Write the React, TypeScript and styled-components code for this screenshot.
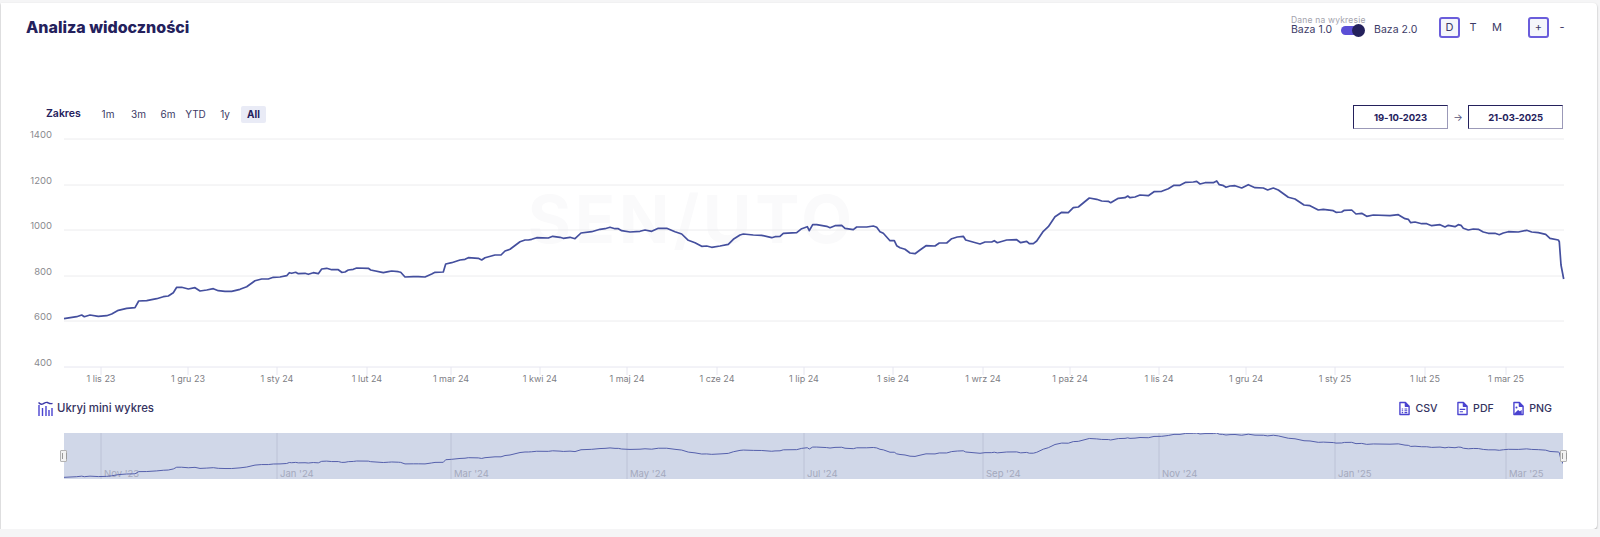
import React from 'react';
import styled, { createGlobalStyle } from 'styled-components';

const GlobalStyle = createGlobalStyle`
  html, body {
    margin: 0;
    padding: 0;
    background: #f5f5f6;
  }
  * { box-sizing: border-box; }
`;

const NAVY = '#24215c';
const ACCENT = '#6a5ddb';
const ICON = '#4a43d0';
const LINE = '#444f9e';
const FONT = '"Inter", "Noto Sans", sans-serif';

const Card = styled.div`
  width: 1596px;
  height: 526px;
  margin: 3px 0 0 1px;
  padding: 11px 30px 0 25px;
  background: #fff;
  border-radius: 0 4px 4px 0;
  box-shadow: 0 1px 2px rgba(0, 0, 0, 0.35);
  font-family: ${FONT};
  color: ${NAVY};
  display: flex;
  flex-direction: column;
`;

const Header = styled.div`
  display: flex;
  justify-content: space-between;
  align-items: flex-start;
  height: 90px;
`;

const Title = styled.h1`
  margin: 2px 0 0;
  font-size: 16px;
  line-height: 22px;
  font-weight: 800;
`;

const Controls = styled.div`
  display: flex;
  align-items: center;
  height: 26px;
`;

const BaseSwitch = styled.div`
  align-self: flex-start;
  width: 148px;
  white-space: nowrap;
`;

const BaseCaption = styled.div`
  font-size: 8.5px;
  line-height: 10px;
  margin-top: 0.5px;
  color: #a3a3ad;
  letter-spacing: 0.2px;
`;

const BaseRow = styled.div`
  display: flex;
  align-items: center;
  font-size: 10.5px;
  line-height: 14px;
  color: #3c3a66;
  margin-top: -1.5px;
`;

const Track = styled.span`
  position: relative;
  display: inline-block;
  width: 20px;
  height: 9px;
  margin: 0 13px 0 9px;
  border-radius: 5px;
  background: #5b4fd6;
`;

const Knob = styled.span`
  position: absolute;
  right: -4px;
  top: -2px;
  width: 13px;
  height: 13px;
  border-radius: 50%;
  background: ${NAVY};
`;

const Toggle = styled.button<{ $active?: boolean; $w: number; $ml?: number }>`
  width: ${p => p.$w}px;
  height: 21px;
  margin-left: ${p => p.$ml ?? 0}px;
  padding: 0;
  font-family: inherit;
  font-size: 11px;
  color: #3c3a66;
  background: ${p => (p.$active ? '#f5f6fb' : 'transparent')};
  border: ${p => (p.$active ? `2px solid ${ACCENT}` : 'none')};
  border-radius: 3px;
`;

const RangeBar = styled.div`
  display: flex;
  align-items: center;
  height: 26px;
  padding-left: 20px;
`;

const RangeGroup = styled.div`
  display: flex;
  align-items: center;
  margin-bottom: 6px;
`;

const RangeLabel = styled.span`
  width: 47px;
  font-size: 10.5px;
  font-weight: 600;
  margin-bottom: 2px;
`;

const RangeButton = styled.button<{ $active?: boolean; $w: number }>`
  width: ${p => p.$w}px;
  height: 17px;
  padding: 0;
  border: none;
  border-radius: 2px;
  font-family: inherit;
  font-size: 10px;
  font-weight: ${p => (p.$active ? 700 : 400)};
  color: ${p => (p.$active ? NAVY : '#3c3a66')};
  background: ${p => (p.$active ? '#e9ebf6' : 'transparent')};
`;

const DateRange = styled.div`
  display: flex;
  align-items: center;
  margin-left: auto;
  margin-right: 4px;
`;

const DateBox = styled.div`
  width: 95px;
  height: 24px;
  display: flex;
  align-items: center;
  justify-content: center;
  font-size: 9.5px;
  font-weight: 700;
  letter-spacing: -0.1px;
  border: 1px solid ${NAVY};
  border-right-color: #9b99b8;
  border-bottom-color: #9b99b8;
`;

const Arrow = styled.span`
  width: 20px;
  text-align: center;
  font-size: 10px;
  color: #55537a;
`;

const ChartSvg = styled.svg`
  display: block;
  margin-left: -26px;
  flex: none;
`;

const ExportRow = styled.div`
  display: flex;
  align-items: center;
  height: 26px;
  margin-top: 9px;
  padding: 0 15px 0 12px;
`;

const MiniToggle = styled.div`
  display: flex;
  align-items: center;
  gap: 4px;
  font-size: 11.4px;
  font-weight: 500;
  color: #35335f;
`;

const Exports = styled.div`
  display: flex;
  gap: 19px;
  margin-left: auto;
`;

const ExportLink = styled.div`
  display: flex;
  align-items: center;
  gap: 5.5px;
  font-size: 10.6px;
  font-weight: 500;
  color: #35335f;
`;

const Navigator = styled.div`
  position: relative;
  width: 1499px;
  height: 46px;
  margin: 12px 0 0 38px;
`;

const NavigatorSvg = styled.svg`
  display: block;
`;

const Handle = styled.span<{ $side: 'left' | 'right' }>`
  position: absolute;
  top: 17px;
  ${p => p.$side}: -4px;
  width: 7px;
  height: 12px;
  background: #f2f2f2;
  border: 1px solid #b3b3b3;
  border-radius: 1px;
  &::after {
    content: '';
    position: absolute;
    left: 1px;
    top: 2px;
    width: 3px;
    height: 6px;
    border-left: 1px solid #9a9a9a;
    border-right: 1px solid #9a9a9a;
  }
`;

// points read off the reference, in page coordinates
const POINTS: [number, number][] = [
  [64,318.7],[76.7,316.7],[81.7,315],[84.3,316.7],[90,315],[98.3,316.3],[106.7,315.7],[111.7,314],[118.3,310.3],[126.7,308.3],
  [135,307.7],[138.7,301],[146.7,300.7],[156.7,298.7],[163.3,296.7],[168.3,296],[173.3,292.7],[176.7,287.3],[181.7,287.3],[188.3,289],
  [195,287.7],[200,291],[206.7,290],[213.3,288.7],[218.3,290.7],[225,291.3],[231.7,291.3],[240,289.3],[246.7,286.7],[255,280.7],
  [261.7,279],[268.3,279],[273.3,277.3],[280,277],[286.7,275.7],[289.3,272.7],[291.7,273.3],[295.7,272.3],[298.3,273.7],[305,273.3],
  [308.3,274.3],[313.3,272.7],[318.3,273.7],[321.7,269],[326.7,268.3],[331.7,269.7],[338.3,269.7],[341.7,272.3],[345,272],[348.3,270],
  [353.3,269.3],[356.7,268],[368.3,268.3],[370.7,270],[383.3,272.7],[388.3,271.7],[391.7,271],[398.3,271.7],[400.7,272.3],[405,277],
  [413.3,276.7],[418.3,276.7],[425,277],[431.7,274],[435,272.3],[443.3,272],[445.7,264],[451.7,262.7],[460,260],[465,259.3],
  [468.3,257.7],[478.3,258.3],[481.7,260],[485,257.7],[495,255],[501,255],[505,251],[510,249.3],[520,241.7],[525,240],
  [528.3,240],[531.7,239.3],[536.7,237.7],[548.3,238],[552.7,236.3],[560,237.3],[563.3,238.3],[570,237.3],[575,238.7],[581,233],
  [591.7,231.7],[600,229.3],[605,228.7],[610,227.3],[615,228.7],[618.3,228.7],[621.7,230.7],[630,232],[640,231.3],[645,230],
  [651.7,231.3],[658.3,228.3],[666.7,228.3],[675,231.7],[681.7,234],[688.3,240.3],[695,242.7],[701.7,246.3],[706.7,246],[711.7,247.3],
  [720,246],[728.3,244.3],[733.3,239.3],[740,235],[743.3,234],[753.3,235],[761.7,235.3],[771.7,237.7],[775,236.7],[780,236.3],
  [783.3,233.3],[796.7,232.7],[801.7,228.7],[807.3,226.7],[809.3,230.7],[812.7,224.7],[816.7,224.7],[826.7,226.3],[830,227.7],[835,225.7],
  [841.7,225.3],[845,228.3],[853.3,229.7],[856.7,227],[866.7,227],[873.3,226],[876.7,227.3],[880,231.7],[883.3,233.3],[890,240.7],
  [894.3,240.7],[896.7,245.7],[900,247.7],[905,249.3],[910,253],[915,253.7],[920,250],[926,245.7],[935,246],[939.3,243],
  [946.7,243],[951.7,238.7],[957.3,237],[963.3,236.3],[965.7,240],[980,244],[985,242],[991.7,242],[994.3,240.7],[997.3,242.7],
  [1006.7,240],[1016.7,239.7],[1020.7,242.7],[1026.7,241.3],[1029.3,243.7],[1033.3,243.7],[1036.7,241],[1043.3,231.3],[1048.3,226.7],[1055,216.7],
  [1061.7,212.3],[1068.3,212.7],[1073.3,207.7],[1078.3,207],[1089.3,198],[1096.7,199.3],[1101.7,201],[1108.3,201.3],[1110.7,202.7],[1118.3,198.3],
  [1125,197.7],[1127.7,196],[1130,197.7],[1135,197],[1140,195],[1148.3,195.7],[1154,191.7],[1161.7,191.3],[1168.3,188.7],[1174,185.3],
  [1180,185.3],[1185.7,182.3],[1193.3,182],[1196.7,181.3],[1200,184],[1205,182.7],[1213.3,182.7],[1216.7,181],[1219.3,184.7],[1222.7,185.3],
  [1226,187.3],[1230,186],[1235,185.7],[1241.7,188],[1248.3,184.7],[1255,187.7],[1263.3,188],[1267.7,190],[1273.3,188],[1278.3,190],
  [1288.3,197.3],[1295,199],[1304,205],[1310,205.7],[1318.3,210],[1323.3,209.3],[1333.3,210.7],[1336,212.3],[1341.7,212],[1344.3,210.3],
  [1351.7,210],[1356,214],[1361.7,213.3],[1366.7,216.3],[1373.3,215],[1390,215.7],[1398.3,214.7],[1405,218.7],[1408.3,219.3],[1410.7,222.7],
  [1415,222],[1421.7,223.7],[1426.7,223.7],[1431.7,225.7],[1440,224.7],[1445,227],[1448.3,225.3],[1455,226.7],[1458.3,224.7],[1461,225.3],
  [1463.3,228.3],[1468.3,230],[1473.3,229],[1478.3,229.3],[1483.3,232],[1488.3,233.3],[1495,233.3],[1499.3,234.7],[1503.3,233],[1508.3,231.7],
  [1518.3,232],[1526.7,230.3],[1531.7,232],[1538.3,232.7],[1545.7,234.3],[1550,238.3],[1558.3,240],[1559.3,241.7],[1561,265],[1563.7,279],
];

const GRID: [string, number][] = [['1400', 139], ['1200', 185], ['1000', 230], ['800', 276], ['600', 321], ['400', 367]];

const TICKS: [string, number][] = [
  ['1 lis 23', 101], ['1 gru 23', 188], ['1 sty 24', 277], ['1 lut 24', 367], ['1 mar 24', 451], ['1 kwi 24', 540],
  ['1 maj 24', 627], ['1 cze 24', 717], ['1 lip 24', 804], ['1 sie 24', 893], ['1 wrz 24', 983], ['1 paź 24', 1070],
  ['1 lis 24', 1159], ['1 gru 24', 1246], ['1 sty 25', 1335], ['1 lut 25', 1425], ['1 mar 25', 1506],
];

const MINI_TICKS: [string, number][] = [
  ["Nov '23", 101], ["Jan '24", 277], ["Mar '24", 451], ["May '24", 627], ["Jul '24", 804], ["Sep '24", 983],
  ["Nov '24", 1159], ["Jan '25", 1335], ["Mar '25", 1506],
];

const CHART_TOP = 130;
const MINI_LEFT = 64;

const mainPath = POINTS.map(([x, y]) => `${x},${y - CHART_TOP}`).join(' ');
const miniPath = POINTS.map(([x, y]) => `${x - MINI_LEFT},${(y - 181) * 0.322}`).join(' ');

const RANGES: { label: string; w: number; active?: boolean }[] = [
  { label: '1m', w: 30 },
  { label: '3m', w: 31 },
  { label: '6m', w: 28 },
  { label: 'YTD', w: 27 },
  { label: '1y', w: 32 },
  { label: 'All', w: 25, active: true },
];

const MiniIcon = () => (
  <svg width="15" height="15" viewBox="0 0 15 15" fill="none" stroke={ICON} strokeWidth="1.4">
    <path d="M0.500 1.500C2 3.200 3.500 3.600 5 2.800S8 0.800 9.500 1.500s2.800 1.800 5 .8" stroke="#3b37a8" />
    <path d="M1 4v11M4.500 7v8M8 5v10M11 9v6M14 7v8" />
  </svg>
);

const FileOutline = () => (
  <>
    <path d="M1 1h6l4 4v9H1z" strokeLinejoin="round" />
    <path d="M7 1v4h4" fill={ICON} strokeLinejoin="round" />
  </>
);

const CsvIcon = () => (
  <svg width="11" height="15" viewBox="0 0 12 15" fill="none" stroke={ICON} strokeWidth="1.5">
    <FileOutline />
    <path d="M3 8h1.500M6 8h3M3 10h1.500M6 10h3M3 12h1.500M6 12h3" strokeWidth="1.100" />
  </svg>
);

const PdfIcon = () => (
  <svg width="11" height="15" viewBox="0 0 12 15" fill="none" stroke={ICON} strokeWidth="1.5">
    <FileOutline />
    <path d="M3 8.500h6M3 11h3.500" strokeWidth="1.200" />
  </svg>
);

const PngIcon = () => (
  <svg width="11" height="15" viewBox="0 0 12 15" fill="none" stroke={ICON} strokeWidth="1.5">
    <FileOutline />
    <path d="M1.500 13 5.500 9l2 1.500 2-1.500V13.500h-8z" fill={ICON} stroke="none" />
    <circle cx="3.800" cy="6.500" r="1.100" fill={ICON} stroke="none" />
  </svg>
);

const App: React.FC = () => {
  return (
    <>
      <GlobalStyle />
      <Card>
        <Header>
          <Title>Analiza widoczności</Title>
          <Controls>
            <BaseSwitch>
              <BaseCaption>Dane na wykresie</BaseCaption>
              <BaseRow>
                Baza 1.0
                <Track>
                  <Knob />
                </Track>
                Baza 2.0
              </BaseRow>
            </BaseSwitch>
            <Toggle $active $w={21}>D</Toggle>
            <Toggle $w={26}>T</Toggle>
            <Toggle $w={22}>M</Toggle>
            <Toggle $active $w={21} $ml={20}>+</Toggle>
            <Toggle $w={10} $ml={8}>-</Toggle>
          </Controls>
        </Header>

        <RangeBar>
          <RangeGroup>
            <RangeLabel>Zakres</RangeLabel>
            {RANGES.map(r => (
              <RangeButton key={r.label} $w={r.w} $active={r.active}>
                {r.label}
              </RangeButton>
            ))}
          </RangeGroup>
          <DateRange>
            <DateBox>19-10-2023</DateBox>
            <Arrow>→</Arrow>
            <DateBox>21-03-2025</DateBox>
          </DateRange>
        </RangeBar>

        <ChartSvg width="1596" height="256" viewBox="0 0 1596 256" fontFamily={FONT}>
          <text x="692" y="113" textAnchor="middle" fontSize="66" fontWeight="700" letterSpacing="4" fill="#fafafb">
            SEN/UTO
          </text>
          {GRID.map(([label, y], i) => (
            <g key={label}>
              <line
                x1="64"
                x2="1564"
                y1={y - CHART_TOP}
                y2={y - CHART_TOP}
                stroke={i === GRID.length - 1 ? '#e6e6f0' : '#ececee'}
              />
              <text x="52" y={y - CHART_TOP - 1} textAnchor="end" fontSize="9.5" fill="#8a8a8f">
                {label}
              </text>
            </g>
          ))}
          {TICKS.map(([label, x]) => (
            <g key={label}>
              <line x1={x} x2={x} y1="237" y2="245" stroke="#e6e6f0" />
              <text x={x} y="252" textAnchor="middle" fontSize="9" fill="#808085">
                {label}
              </text>
            </g>
          ))}
          <polyline points={mainPath} fill="none" stroke={LINE} strokeWidth="1.7" strokeLinejoin="round" />
        </ChartSvg>

        <ExportRow>
          <MiniToggle>
            <MiniIcon />
            Ukryj mini wykres
          </MiniToggle>
          <Exports>
            <ExportLink>
              <CsvIcon />
              CSV
            </ExportLink>
            <ExportLink>
              <PdfIcon />
              PDF
            </ExportLink>
            <ExportLink>
              <PngIcon />
              PNG
            </ExportLink>
          </Exports>
        </ExportRow>

        <Navigator>
          <NavigatorSvg width="1499" height="46" viewBox="0 0 1499 46" fontFamily={FONT}>
            <rect width="1499" height="46" fill="#d0d7e8" />
            {MINI_TICKS.map(([label, x]) => (
              <g key={label}>
                <line x1={x - MINI_LEFT} x2={x - MINI_LEFT} y1="0" y2="46" stroke="#bcc2d6" />
                <text x={x - MINI_LEFT + 3} y="43.5" fontSize="9.5" fill="#a4a9bd">
                  {label}
                </text>
              </g>
            ))}
            <polyline points={miniPath} fill="none" stroke="#5560ac" strokeWidth="1" />
          </NavigatorSvg>
          <Handle $side="left" />
          <Handle $side="right" />
        </Navigator>
      </Card>
    </>
  );
};

export default App;
